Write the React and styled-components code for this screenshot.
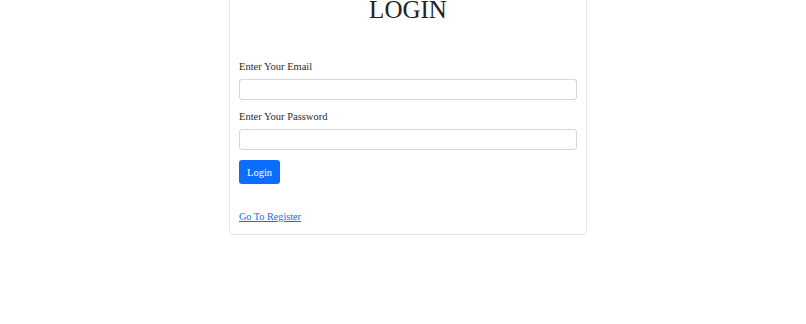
import React from 'react';
import styled, { createGlobalStyle } from 'styled-components';

const GlobalStyle = createGlobalStyle`
  html, body {
    margin: 0;
    padding: 0;
    background: #ffffff;
    font-family: "Liberation Serif", "Times New Roman", serif;
    color: #212529;
  }
`;

const Page = styled.div`
  width: 806px;
  height: 324px;
  overflow: hidden;
  display: flex;
  justify-content: flex-start;
`;

const Card = styled.div`
  box-sizing: border-box;
  width: 358px;
  margin: -14px 0 0 229px;
  align-self: flex-start;
  border: 1px solid #dfe2e6;
  border-radius: 4px;
  padding: 0 9px 9px;
  display: flex;
  flex-direction: column;
`;

const Title = styled.h1`
  margin: 0;
  padding-top: 8px;
  text-align: center;
  font-weight: 400;
  font-size: 25px;
  line-height: 30px;
  color: #222;
`;

const Form = styled.form`
  display: flex;
  flex-direction: column;
  margin-top: 34px;
`;

const Label = styled.label`
  font-size: 10.5px;
  line-height: 16px;
  color: #2b2b2b;
  margin: ${p => (p.$first ? '0' : '9px')} 0 4px;
`;

const Input = styled.input`
  box-sizing: border-box;
  height: 21px;
  width: 100%;
  border: 1px solid #d3d6da;
  border-radius: 3px;
  padding: 2px 6px;
  font-family: inherit;
  font-size: 12px;
  outline: none;
`;

const Button = styled.button`
  align-self: flex-start;
  margin-top: 10px;
  height: 24px;
  padding: 0 8px;
  border: none;
  border-radius: 3px;
  background: #0d6efd;
  color: #fff;
  font-family: inherit;
  font-size: 10.5px;
`;

const RegisterLink = styled.a`
  align-self: flex-start;
  margin-top: 25px;
  font-size: 10.2px;
  line-height: 16px;
  color: #0d6efd;
  text-decoration: underline;
`;

export default function App() {
  return (
    <>
      <GlobalStyle />
      <Page>
        <Card>
          <Title>LOGIN</Title>
          <Form onSubmit={e => e.preventDefault()}>
            <Label $first>Enter Your Email</Label>
            <Input type="email" />
            <Label>Enter Your Password</Label>
            <Input type="password" />
            <Button type="submit">Login</Button>
          </Form>
          <RegisterLink href="#">Go To Register</RegisterLink>
        </Card>
      </Page>
    </>
  );
}
